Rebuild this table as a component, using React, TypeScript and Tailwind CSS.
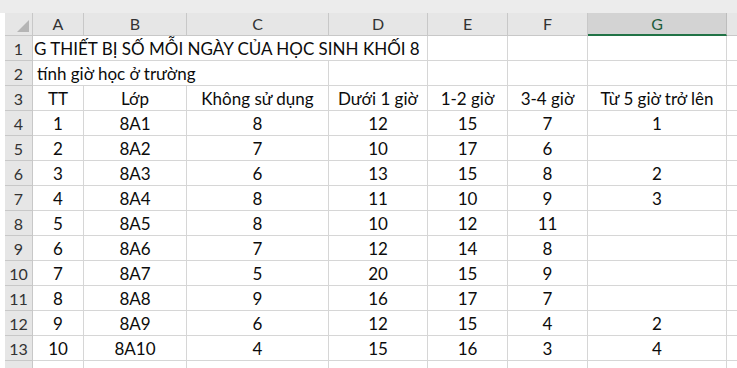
import React from 'react';

const cols = [
  { key: 'A', w: 'w-[51px]' },
  { key: 'B', w: 'w-[103px]' },
  { key: 'C', w: 'w-[142px]' },
  { key: 'D', w: 'w-[99px]' },
  { key: 'E', w: 'w-[80px]' },
  { key: 'F', w: 'w-[80px]' },
  { key: 'G', w: 'w-[139px]' },
  { key: 'H', w: 'w-[60px]' },
];

const header = ['TT', 'Lớp', 'Không sử dụng', 'Dưới 1 giờ', '1-2 giờ', '3-4 giờ', 'Từ 5 giờ trở lên', ''];

const data = [
  ['1', '8A1', '8', '12', '15', '7', '1'],
  ['2', '8A2', '7', '10', '17', '6', ''],
  ['3', '8A3', '6', '13', '15', '8', '2'],
  ['4', '8A4', '8', '11', '10', '9', '3'],
  ['5', '8A5', '8', '10', '12', '11', ''],
  ['6', '8A6', '7', '12', '14', '8', ''],
  ['7', '8A7', '5', '20', '15', '9', ''],
  ['8', '8A8', '9', '16', '17', '7', ''],
  ['9', '8A9', '6', '12', '15', '4', '2'],
  ['10', '8A10', '4', '15', '16', '3', '4'],
];

function RowHead({ n }: { n: number | string }) {
  return (
    <div className="w-[28px] shrink-0 flex items-end justify-center pb-[3px] bg-[#e6e6e6] border-r border-b border-[#c8c8c8] text-[16px] text-[#333]">
      {n}
    </div>
  );
}

function Cell({ w, children }: { w: string; children?: React.ReactNode }) {
  return (
    <div className={`${w} shrink-0 flex items-end justify-center pb-[3px] border-r border-b border-[#d6d6d6] whitespace-nowrap`}>
      {children}
    </div>
  );
}

export default function App() {
  return (
    <div
      className="w-[737px] h-[368px] overflow-hidden bg-white text-[17px] leading-none text-[#0c0c0c]"
      style={{ fontFamily: 'Lato, "Noto Sans", sans-serif' }}
    >
      <div className="h-[13px] bg-[#ececec]" />
      <div className="pl-[5px]">
        {/* column letters */}
        <div className="flex h-[23px] text-[16px]">
          <div className="w-[28px] shrink-0 relative bg-[#e6e6e6] border-r border-b border-[#c8c8c8]">
            <svg className="absolute right-[3px] bottom-[3px]" width="12" height="12" viewBox="0 0 12 12">
              <polygon points="12,0 12,12 0,12" fill="#b5b5b5" />
            </svg>
          </div>
          {cols.map((c) =>
            c.key === 'G' ? (
              <div
                key={c.key}
                className={`${c.w} shrink-0 flex items-center justify-center bg-[#d3d3d3] border-r border-[#bdbdbd] border-b-2 border-b-[#217346] text-[#1e5c3a]`}
              >
                {c.key}
              </div>
            ) : (
              <div
                key={c.key}
                className={`${c.w} shrink-0 flex items-center justify-center bg-[#e6e6e6] border-r border-b border-[#c8c8c8] text-[#333]`}
              >
                {c.key === 'H' ? '' : c.key}
              </div>
            )
          )}
        </div>

        {/* row 1: title overflowing across A..D */}
        <div className="flex h-[25px]">
          <RowHead n={1} />
          <div className="w-[395px] shrink-0 flex items-end pb-[3px] pl-[1px] overflow-hidden border-b border-r border-[#d6d6d6] whitespace-nowrap">
            G THIẾT BỊ SỐ MỖI NGÀY CỦA HỌC SINH KHỐI 8
          </div>
          <Cell w="w-[80px]" />
          <Cell w="w-[80px]" />
          <Cell w="w-[139px]" />
          <Cell w="w-[60px]" />
        </div>

        {/* row 2: subtitle overflowing across A..C */}
        <div className="flex h-[25px]">
          <RowHead n={2} />
          <div className="w-[296px] shrink-0 flex items-end pb-[3px] pl-[4px] overflow-hidden border-b border-r border-[#d6d6d6] whitespace-nowrap">
            tính giờ học ở trường
          </div>
          <Cell w="w-[99px]" />
          <Cell w="w-[80px]" />
          <Cell w="w-[80px]" />
          <Cell w="w-[139px]" />
          <Cell w="w-[60px]" />
        </div>

        {/* row 3: headers */}
        <div className="flex h-[25px]">
          <RowHead n={3} />
          {cols.map((c, i) => (
            <Cell key={c.key} w={c.w}>
              {header[i]}
            </Cell>
          ))}
        </div>

        {data.map((r, ri) => (
          <div key={ri} className="flex h-[25px]">
            <RowHead n={ri + 4} />
            {cols.map((c, i) => (
              <Cell key={c.key} w={c.w}>
                {r[i] ?? ''}
              </Cell>
            ))}
          </div>
        ))}

        <div className="flex h-[25px]">
          <RowHead n="" />
          {cols.map((c) => (
            <Cell key={c.key} w={c.w} />
          ))}
        </div>
      </div>
    </div>
  );
}
